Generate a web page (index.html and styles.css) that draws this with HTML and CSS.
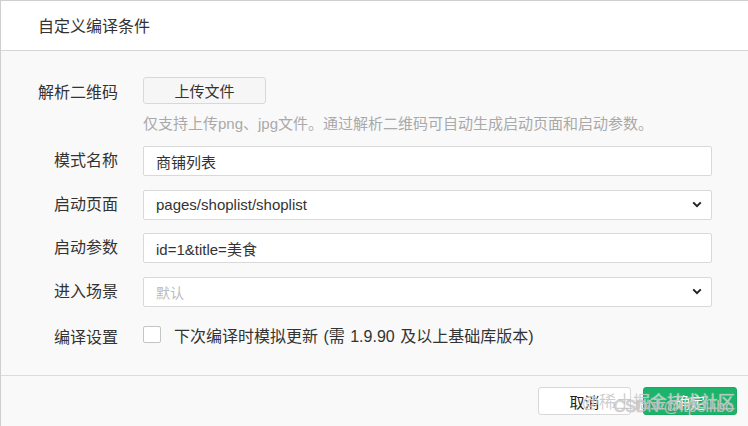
FILE: index.html
```html
<!DOCTYPE html>
<html lang="zh-CN">
<head>
<meta charset="utf-8">
<title>自定义编译条件</title>
<link rel="stylesheet" href="styles.css">
</head>
<body>
<div class="dialog">
  <div class="dialog-header">自定义编译条件</div>
  <div class="dialog-body">
    <div class="row row-upload">
      <div class="label">解析二维码</div>
      <div class="control"><button class="btn-upload" type="button">上传文件</button></div>
    </div>
    <div class="row row-hint">
      <div></div>
      <div class="hint">仅支持上传png、jpg文件。通过解析二维码可自动生成启动页面和启动参数。</div>
    </div>
    <div class="row row-field">
      <div class="label">模式名称</div>
      <div class="field">商铺列表</div>
    </div>
    <div class="row row-field">
      <div class="label">启动页面</div>
      <div class="field select"><span>pages/shoplist/shoplist</span>
        <svg class="chevron" width="10" height="7" viewBox="0 0 10 7"><path d="M1.2 1.4 L5 5.2 L8.8 1.4" fill="none" stroke="#222" stroke-width="2"/></svg>
      </div>
    </div>
    <div class="row row-field">
      <div class="label">启动参数</div>
      <div class="field">id=1&amp;title=美食</div>
    </div>
    <div class="row row-field">
      <div class="label">进入场景</div>
      <div class="field select"><span class="placeholder">默认</span>
        <svg class="chevron" width="10" height="7" viewBox="0 0 10 7"><path d="M1.2 1.4 L5 5.2 L8.8 1.4" fill="none" stroke="#222" stroke-width="2"/></svg>
      </div>
    </div>
    <div class="row row-check">
      <div class="label">编译设置</div>
      <div class="check-wrap"><span class="checkbox"></span><span class="check-text">下次编译时模拟更新 (需 1.9.90 及以上基础库版本)</span></div>
    </div>
  </div>
  <div class="dialog-footer">
    <button class="btn btn-cancel" type="button">取消</button>
    <button class="btn btn-ok" type="button">确定</button>
    <div class="watermark">
      <span class="wm1">@稀土掘金技术社区</span>
      <span class="wm2">CSDN @itpeilibo</span>
    </div>
  </div>
</div>
</body>
</html>
```
FILE: styles.css
```css
* { box-sizing: border-box; }
html, body {
  margin: 0;
  padding: 0;
  background: #f9f9f9;
}
body {
  font-family: "Liberation Sans", "Noto Sans CJK SC", sans-serif;
  color: #333;
}
.dialog {
  width: 748px;
  height: 426px;
  border-top: 1px solid #cfcfcf;
  border-left: 1px solid #cfcfcf;
  display: flex;
  flex-direction: column;
  background: #f9f9f9;
}
.dialog-header {
  height: 50px;
  background: #fff;
  border-bottom: 1px solid #d6d6d6;
  padding-left: 37px;
  padding-bottom: 1px;
  display: flex;
  align-items: center;
  font-size: 16px;
  color: #333;
}
.dialog-body {
  flex: 1;
  padding: 26px 36px 0 0;
  display: flex;
  flex-direction: column;
}
.row {
  display: grid;
  grid-template-columns: 117px 1fr;
  column-gap: 25px;
  align-items: center;
}
.label {
  text-align: right;
  font-size: 16px;
  color: #333;
  line-height: 20px;
}
.row-upload .label { padding-top: 5px; }
.btn-upload {
  width: 123px;
  height: 27px;
  background: #f6f6f6;
  border: 1px solid #d8d8d8;
  border-radius: 3px;
  font-family: inherit;
  font-size: 15px;
  color: #333;
  padding: 0;
}
.row-hint { margin-top: 10px; }
.hint {
  font-size: 15px;
  color: #a9a9a9;
  line-height: 20px;
  white-space: nowrap;
}
.row-field { margin-top: 13.5px; }
.row-hint + .row-field { margin-top: 12px; }
.field {
  height: 30px;
  background: #fff;
  border: 1px solid #d9d9d9;
  border-radius: 2px;
  padding: 0 12px;
  display: flex;
  align-items: center;
  font-size: 15px;
  color: #333;
}
.select { justify-content: space-between; padding-right: 9px; }
.placeholder { color: #bcbcbc; font-size: 14px; }
.chevron { display: block; }
.row-check { margin-top: 13px; height: 30px; }
.row-check .label { padding-top: 6px; }
.check-wrap {
  display: flex;
  align-items: center;
  gap: 13px;
  font-size: 16px;
  color: #333;
  white-space: nowrap;
}
.check-text { word-spacing: 1px; }
.checkbox {
  width: 18px;
  height: 17px;
  border: 1px solid #c4c4c4;
  border-radius: 2px;
  background: #fff;
  flex: none;
}
.dialog-footer {
  height: 51px;
  border-top: 1px solid #dcdcdc;
  background: #f9f9f9;
  display: flex;
  justify-content: flex-end;
  align-items: flex-start;
  gap: 12px;
  padding: 11px 11px 0 0;
  position: relative;
}
.btn {
  height: 28px;
  border-radius: 3px;
  font-family: inherit;
  font-size: 15px;
  padding: 0;
}
.btn-cancel {
  width: 93px;
  background: #fff;
  border: 1px solid #d8d8d8;
  color: #222;
}
.btn-ok {
  width: 94px;
  background: #1cb46a;
  border: 1px solid #1aab63;
  color: #fff;
}
.watermark {
  position: absolute;
  right: 12px;
  top: 12px;
  width: 150px;
  height: 36px;
  pointer-events: none;
}
.wm1 {
  position: absolute;
  right: 1px;
  top: 0;
  font-size: 17px;
  color: rgba(190, 190, 190, 0.75);
  white-space: nowrap;
  text-shadow: 0 0 1px rgba(255,255,255,0.8);
}
.wm2 {
  position: absolute;
  right: 2px;
  top: 10px;
  font-size: 16px;
  color: rgba(255, 255, 255, 0.55);
  white-space: nowrap;
  text-shadow: 0 0 1px rgba(120,120,120,0.9);
}
```
